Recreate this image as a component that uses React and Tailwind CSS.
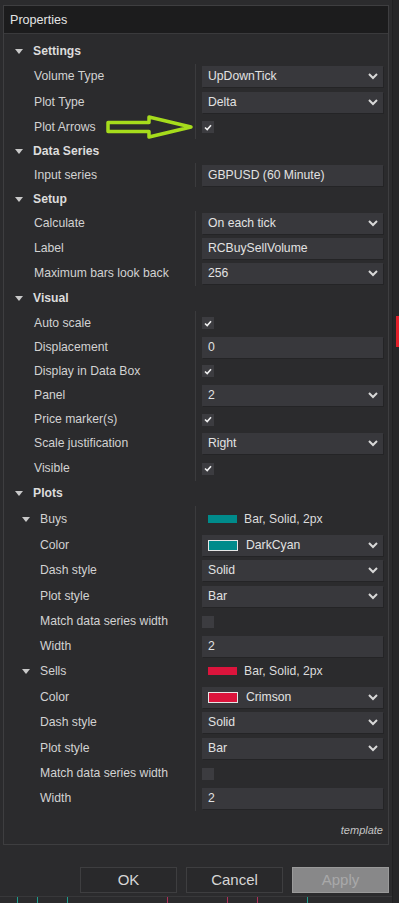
import React from 'react';

const font = "font-['Liberation_Sans',Arial,sans-serif]";

function Tri({ sub }) {
    return (
        <svg width="8" height="5" viewBox="0 0 8 5" className={sub ? 'ml-[18px] mr-[10px]' : 'ml-[11px] mr-[10px]'}>
            <polygon points="0,0 8,0 4,5" fill="#c9c9c9" />
        </svg>
    );
}

function Chevron() {
    return (
        <svg width="10" height="7" viewBox="0 0 10 7" className="ml-auto mr-[5px]">
            <polyline points="1,1 5,5 9,1" fill="none" stroke="#d8d8d8" strokeWidth="2" />
        </svg>
    );
}

function Header({ label, h }) {
    return (
        <div className={`flex items-center ${h}`}>
            <Tri />
            <span className="font-bold text-[#dcdcdc]">{label}</span>
        </div>
    );
}

function Row({ label, h, deep, children }) {
    return (
        <div className={`flex ${h}`}>
            <div className={`w-[191px] flex items-center text-[#d2d2d2] ${deep ? 'pl-[36px]' : 'pl-[30px]'}`}>{label}</div>
            <div className="flex-1 flex items-center border-l border-[#3b3b3d] pl-[6px] pr-[5px]">{children}</div>
        </div>
    );
}

function Field({ text, select, swatch }) {
    return (
        <div className="w-full h-[21px] flex items-center bg-[#38383c] shadow-[1px_1px_0_#242426] pl-[6px] text-[#e2e2e2]">
            {swatch && <span className={`w-[30px] h-[11px] border border-[#e6e6e6] mr-[8px] ${swatch}`} />}
            <span>{text}</span>
            {select && <Chevron />}
        </div>
    );
}

function Check({ on }) {
    return (
        <div className="w-[12px] h-[12px] bg-[#3c3c40] flex items-center justify-center">
            {on && (
                <svg width="8" height="7" viewBox="0 0 8 7">
                    <polyline points="1,3.5 3.2,5.6 7,1.2" fill="none" stroke="#f0f0f0" strokeWidth="1.6" />
                </svg>
            )}
        </div>
    );
}

export default function App() {
    return (
        <div className={`w-[399px] h-[903px] bg-[#2b2b2d] flex overflow-hidden text-[12.2px] ${font}`}>
            <div className="w-[393px] flex flex-col border-r border-[#202022] relative">
                <div className="ml-[3px] mt-[5px] w-[386px] border border-[#3e3e40] flex flex-col">
                    <div className="h-[28px] bg-[#1c1c1d] border-b border-[#3a3a3c] flex items-center pl-[6px] pt-[1px] text-[12.6px] text-[#e4e4e4]">Properties</div>
                    <div className="pt-[5px] flex flex-col">
                        <Header label="Settings" h="h-[25px]" />
                        <Row label="Volume Type" h="h-[25px]"><Field text="UpDownTick" select /></Row>
                        <Row label="Plot Type" h="h-[26px]"><Field text="Delta" select /></Row>
                        <Row label="Plot Arrows" h="h-[24px]"><Check on /></Row>

                        <Header label="Data Series" h="h-[24px]" />
                        <Row label="Input series" h="h-[24px]"><Field text="GBPUSD (60 Minute)" /></Row>

                        <Header label="Setup" h="h-[24px]" />
                        <Row label="Calculate" h="h-[25px]"><Field text="On each tick" select /></Row>
                        <Row label="Label" h="h-[25px]"><Field text="RCBuySellVolume" /></Row>
                        <Row label="Maximum bars look back" h="h-[25px]"><Field text="256" select /></Row>

                        <Header label="Visual" h="h-[25px]" />
                        <Row label="Auto scale" h="h-[24px]"><Check on /></Row>
                        <Row label="Displacement" h="h-[24px]"><Field text="0" /></Row>
                        <Row label="Display in Data Box" h="h-[24px]"><Check on /></Row>
                        <Row label="Panel" h="h-[25px]"><Field text="2" select /></Row>
                        <Row label="Price marker(s)" h="h-[23px]"><Check on /></Row>
                        <Row label="Scale justification" h="h-[25px]"><Field text="Right" select /></Row>
                        <Row label="Visible" h="h-[25px]"><Check on /></Row>

                        <Header label="Plots" h="h-[25px]" />
                        <div className="flex h-[26px]">
                            <div className="w-[191px] flex items-center text-[#d2d2d2]"><Tri sub />Buys</div>
                            <div className="flex-1 flex items-center border-l border-[#3b3b3d] pl-[12px] text-[#dcdcdc]">
                                <span className="w-[29px] h-[8px] bg-[#008b8b] mr-[7px]" />Bar, Solid, 2px
                            </div>
                        </div>
                        <Row label="Color" h="h-[26px]" deep><Field text="DarkCyan" select swatch="bg-[#008b8b]" /></Row>
                        <Row label="Dash style" h="h-[25px]" deep><Field text="Solid" select /></Row>
                        <Row label="Plot style" h="h-[26px]" deep><Field text="Bar" select /></Row>
                        <Row label="Match data series width" h="h-[25px]" deep><Check /></Row>
                        <Row label="Width" h="h-[24px]" deep><Field text="2" /></Row>

                        <div className="flex h-[26px]">
                            <div className="w-[191px] flex items-center text-[#d2d2d2]"><Tri sub />Sells</div>
                            <div className="flex-1 flex items-center border-l border-[#3b3b3d] pl-[12px] text-[#dcdcdc]">
                                <span className="w-[29px] h-[8px] bg-[#dc143c] mr-[7px]" />Bar, Solid, 2px
                            </div>
                        </div>
                        <Row label="Color" h="h-[26px]" deep><Field text="Crimson" select swatch="bg-[#dc143c]" /></Row>
                        <Row label="Dash style" h="h-[25px]" deep><Field text="Solid" select /></Row>
                        <Row label="Plot style" h="h-[26px]" deep><Field text="Bar" select /></Row>
                        <Row label="Match data series width" h="h-[25px]" deep><Check /></Row>
                        <Row label="Width" h="h-[25px]" deep><Field text="2" /></Row>

                        <div className="h-[33px] flex items-end justify-end pb-[6px] pr-[5px] italic text-[11px] text-[#c4c4c4]">template</div>
                    </div>
                </div>

                <div className="mt-[22px] flex justify-end gap-[9px] pr-[3px] text-[15px]">
                    <button className="w-[97px] h-[26px] border border-[#3e3e40] bg-[#29292b] text-[#d6d6d6]">OK</button>
                    <button className="w-[97px] h-[26px] border border-[#3e3e40] bg-[#29292b] text-[#d6d6d6]">Cancel</button>
                    <button className="w-[97px] h-[26px] border border-[#9a9a9a] bg-[#888889] text-[#a9a9a9]">Apply</button>
                </div>

                <div className="mt-[3px] flex-1 border-t border-[#38383a] relative">
                    <span className="absolute left-[17px] top-0 w-[1px] h-[6px] bg-[#1f9e8e]" />
                    <span className="absolute left-[37px] top-0 w-[1px] h-[6px] bg-[#1f9e8e]" />
                    <span className="absolute left-[67px] top-0 w-[1px] h-[6px] bg-[#1f9e8e]" />
                    <span className="absolute left-[167px] top-0 w-[1px] h-[6px] bg-[#b0305a]" />
                    <span className="absolute left-[227px] top-0 w-[1px] h-[6px] bg-[#b0305a]" />
                    <span className="absolute left-[257px] top-0 w-[1px] h-[6px] bg-[#b0305a]" />
                    <span className="absolute left-[307px] top-0 w-[1px] h-[6px] bg-[#1f9e8e]" />
                </div>

                <svg className="absolute left-[104px] top-[113px]" width="92" height="28" viewBox="104 112 92 28">
                    <polygon points="108,121.5 149,121.5 149,116 191,126 149,136 149,130.5 108,130.5" fill="none" stroke="#a6dc1c" strokeWidth="3.5" strokeLinejoin="round" />
                </svg>
            </div>
            <div className="flex-1 bg-[#262628] relative">
                <span className="absolute left-[3px] top-[316px] w-[3px] h-[31px] bg-[#e0202a]" />
            </div>
        </div>
    );
}
